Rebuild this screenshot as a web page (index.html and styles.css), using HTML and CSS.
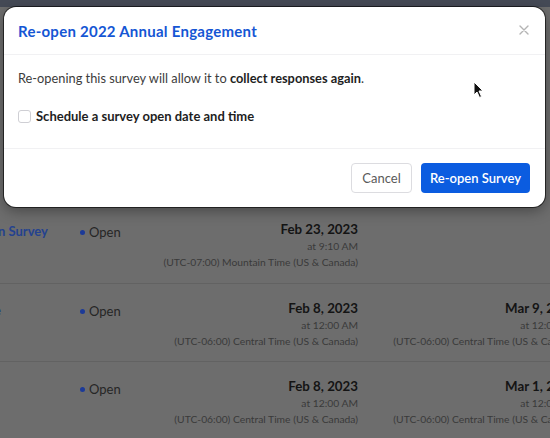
FILE: index.html
```html
<!DOCTYPE html>
<html>
<head>
<meta charset="utf-8">
<link rel="stylesheet" href="styles.css">
</head>
<body>
<div class="page">
  <div class="topbar"></div>
  <div class="table">
    <div class="row row-first">
      <div class="c-name"><span class="link">Annual Check-in Survey</span></div>
      <div class="c-status"><span class="dot"></span>Open</div>
      <div class="c-date">
        <div class="d-main">Feb 23, 2023</div>
        <div class="d-time">at 9:10 AM</div>
        <div class="d-zone">(UTC-07:00) Mountain Time (US &amp; Canada)</div>
      </div>
      <div class="c-date2"></div>
    </div>
    <div class="row">
      <div class="c-name"><span class="link">Employee Pulse</span></div>
      <div class="c-status"><span class="dot"></span>Open</div>
      <div class="c-date">
        <div class="d-main">Feb 8, 2023</div>
        <div class="d-time">at 12:00 AM</div>
        <div class="d-zone">(UTC-06:00) Central Time (US &amp; Canada)</div>
      </div>
      <div class="c-date2">
        <div class="d-main">Mar 9, 2023</div>
        <div class="d-time">at 12:00 AM</div>
        <div class="d-zone">(UTC-06:00) Central Time (US &amp; Canada)</div>
      </div>
    </div>
    <div class="row">
      <div class="c-name"><span class="link"></span></div>
      <div class="c-status"><span class="dot"></span>Open</div>
      <div class="c-date">
        <div class="d-main">Feb 8, 2023</div>
        <div class="d-time">at 12:00 AM</div>
        <div class="d-zone">(UTC-06:00) Central Time (US &amp; Canada)</div>
      </div>
      <div class="c-date2">
        <div class="d-main">Mar 1, 2023</div>
        <div class="d-time">at 12:00 AM</div>
        <div class="d-zone">(UTC-06:00) Central Time (US &amp; Canada)</div>
      </div>
    </div>
  </div>

  <div class="modal">
    <div class="m-header">
      <h2 class="m-title">Re-open 2022 Annual Engagement</h2>
      <svg class="m-close" width="10" height="10" viewBox="0 0 10 10"><path d="M1 1L9 9M9 1L1 9" stroke="#b4b4b4" stroke-width="1.4" stroke-linecap="round"/></svg>
    </div>
    <div class="m-body">
      <p class="m-text">Re-opening this survey will allow it to <strong>collect responses again</strong>.</p>
      <label class="m-check"><span class="box"></span><span>Schedule a survey open date and time</span></label>
    </div>
    <div class="m-footer">
      <button class="btn btn-cancel">Cancel</button>
      <button class="btn btn-primary">Re-open Survey</button>
    </div>
  </div>

  <svg class="cursor" width="12" height="18" viewBox="0 0 12 18"><path d="M1 1L1 14L4 11L6.5 16.5L8.5 15.5L6 10L10 10Z" fill="#111" stroke="#fff" stroke-width="1" stroke-linejoin="round"/></svg>
</div>
</body>
</html>
```
FILE: styles.css
```css
* { box-sizing: border-box; }
html, body { margin: 0; padding: 0; }
body {
  width: 550px;
  height: 438px;
  overflow: hidden;
  background: #6d6d6d;
  font-family: Lato, "Open Sans", sans-serif;
}
.page {
  position: relative;
  width: 550px;
  height: 438px;
  overflow: hidden;
}
.topbar {
  height: 7px;
  background: #454a56;
}
.table {
  margin-left: -140px;
  width: 760px;
  padding-top: 199px;
}
.row {
  display: flex;
  height: 78px;
  border-top: 1px solid #626262;
  padding-top: 16px;
  white-space: nowrap;
}
.row-first {
  border-top: none;
  margin-top: -1px;
}
.c-name {
  width: 220px;
  flex: none;
  padding-left: 50px;
  padding-top: 2px;
  font-size: 13px;
  font-weight: 700;
  overflow: hidden;
}
.link { color: #24428f; }
.c-status {
  width: 60px;
  flex: none;
  font-size: 13px;
  color: #262626;
  display: flex;
  align-items: flex-start;
  gap: 4px;
  padding-top: 3px;
  line-height: 16px;
}
.dot {
  width: 5px;
  height: 5px;
  border-radius: 50%;
  background: #1c3a98;
  margin-top: 6px;
}
.c-date, .c-date2 {
  flex: none;
  display: flex;
  flex-direction: column;
  align-items: flex-end;
}
.c-date { width: 218px; }
.c-date2 { width: 219px; }
.d-main {
  font-size: 13.3px;
  font-weight: 700;
  color: #141414;
  line-height: 17px;
}
.d-time, .d-zone {
  font-size: 10.3px;
  color: #3a3a3a;
  line-height: 16px;
}

.modal {
  position: absolute;
  left: 4px;
  top: 7px;
  width: 541px;
  height: 200px;
  background: #fff;
  border-radius: 12px;
  box-shadow: 0 0 0 1px rgba(0,0,0,0.6), 0 4px 14px rgba(0,0,0,0.35);
  display: flex;
  flex-direction: column;
}
.m-header {
  height: 48px;
  flex: none;
  display: flex;
  align-items: center;
  justify-content: space-between;
  padding: 0 16px 0 14px;
  border-bottom: 1px solid #f1f1f3;
}
.m-title {
  margin: 0;
  font-size: 15px;
  font-weight: 700;
  color: #1556d4;
  letter-spacing: 0.25px;
}
.m-close { margin-top: -2px; }
.m-body {
  height: 94px;
  flex: none;
  padding: 14px 14px 0;
  border-bottom: 1px solid #f1f1f3;
}
.m-text {
  margin: 0;
  font-size: 12.8px;
  line-height: 18px;
  color: #3c3c3c;
}
.m-text strong { color: #1e1e1e; font-weight: 700; }
.m-check {
  display: flex;
  align-items: center;
  gap: 5px;
  margin-top: 19px;
  height: 20px;
  font-size: 13px;
  font-weight: 700;
  color: #1e1e1e;
}
.box {
  width: 13px;
  height: 13px;
  border: 1px solid #cfcfd4;
  border-radius: 3px;
  background: #fff;
}
.m-footer {
  flex: 1;
  display: flex;
  align-items: center;
  justify-content: flex-end;
  gap: 9px;
  padding-right: 15px;
}
.btn {
  height: 30px;
  border-radius: 4px;
  font-family: Lato, "Open Sans", sans-serif;
  font-size: 13px;
  padding: 0;
}
.btn-cancel {
  width: 61px;
  background: #fff;
  border: 1px solid #dcdce0;
  color: #5a5a5a;
}
.btn-primary {
  width: 109px;
  background: #0b5ce0;
  border: none;
  color: #fff;
  font-weight: 600;
}
.cursor {
  position: absolute;
  left: 473px;
  top: 81px;
}
```
